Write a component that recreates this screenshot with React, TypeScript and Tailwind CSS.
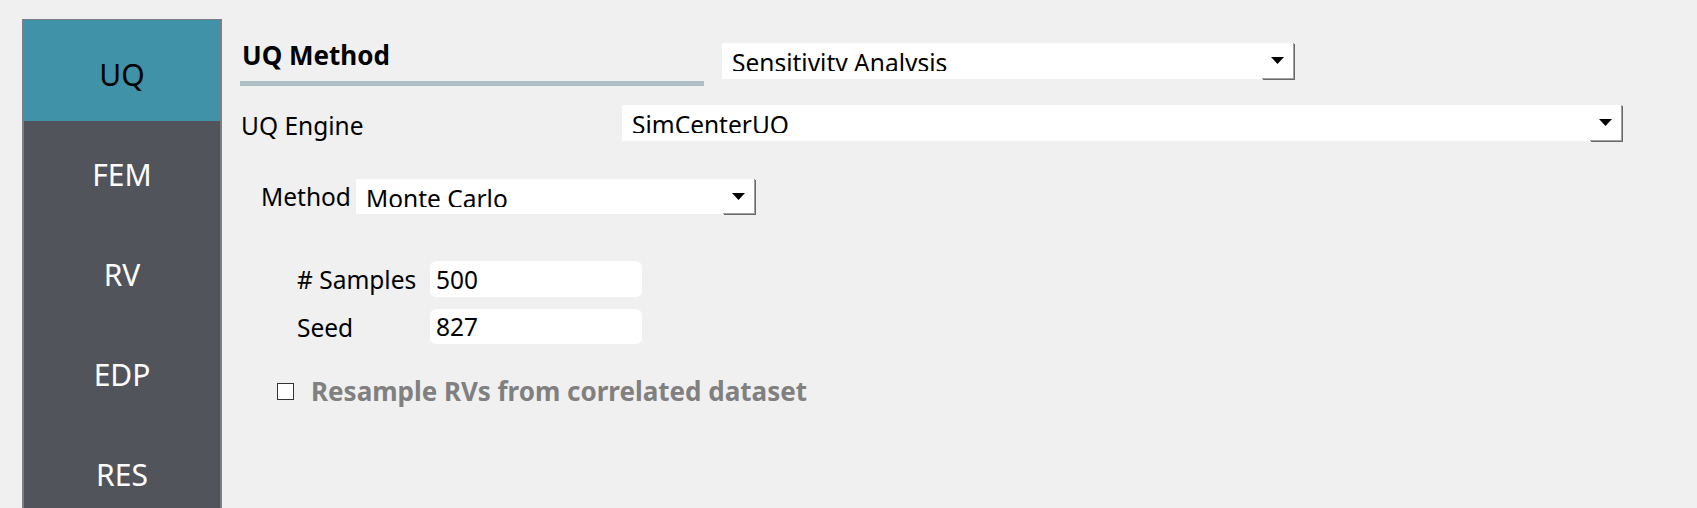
import React from "react";

const tabs = ["UQ", "FEM", "RV", "EDP", "RES"];

function Arrow() {
  return (
    <svg width="13" height="7" viewBox="0 0 13 7" className="block">
      <polygon points="0,0 13,0 6.5,7" fill="#000" />
    </svg>
  );
}

function Combo({ value, width, height = 36 }: { value: string; width: string; height?: number }) {
  return (
    <div className={`flex shrink-0 bg-white ${width}`} style={{ height }}>
      {/* text is clipped at the baseline, as in the original widget */}
      <div className="h-[28px] min-w-0 flex-1 overflow-hidden pl-[10px] pt-[2px]">
        <div className="whitespace-nowrap text-[24.5px] leading-[36px] text-black">{value}</div>
      </div>
      <div className="flex w-[32px] items-center justify-center border-b border-r border-[#a0a0a0] shadow-[1px_1px_0_#696969]">
        <Arrow />
      </div>
    </div>
  );
}

function Field({ label, value, height = 36 }: { label: string; value: string; height?: number }) {
  return (
    <div className="flex items-center" style={{ height }}>
      <div className="ml-[75px] w-[133px] pt-[3px] text-[24.5px] leading-none">{label}</div>
      <div
        className="flex w-[212px] items-center rounded-[6px] bg-white pl-[6px] pt-[2px] text-[24.5px]"
        style={{ height }}
      >
        {value}
      </div>
    </div>
  );
}

export default function App() {
  return (
    <div className="flex h-[508px] w-[1697px] overflow-hidden bg-[#f0f0f0] font-['Noto_Sans',sans-serif] text-black">
      {/* side tabs */}
      <div className="ml-[22px] mt-[19px] flex w-[200px] shrink-0 flex-col overflow-hidden border-l-2 border-r-2 border-t border-[#7b7e84] bg-[#51545b]">
        {tabs.map((t, i) => (
          <div
            key={t}
            className={
              i === 0
                ? "flex h-[101px] shrink-0 items-center justify-center bg-[#3f92a8] pt-[8px] text-[30px] text-black"
                : "flex h-[100px] shrink-0 items-center justify-center pt-[6px] text-[30px] text-white"
            }
          >
            {t}
          </div>
        ))}
      </div>

      {/* content */}
      <div className="flex flex-1 flex-col">
        <div className="mt-[41px] flex items-start">
          <div className="ml-[18px] w-[464px]">
            <div className="h-[28px] whitespace-nowrap pl-[2px] text-[26px] font-bold leading-[28px]">UQ Method</div>
            <div className="mt-[12px] h-[5px] bg-[#b0bec5]" />
          </div>
          <div className="ml-[18px] mt-[2px]">
            <Combo value="Sensitivity Analysis" width="w-[572px]" />
          </div>
        </div>

        <div className="mt-[19px] flex h-[36px] items-center">
          <div className="ml-[19px] w-[381px] pt-[6px] text-[24.5px] leading-none">UQ Engine</div>
          <Combo value="SimCenterUQ" width="w-[1000px]" />
        </div>

        <div className="mt-[38px] flex h-[35px] items-center">
          <div className="ml-[39px] w-[95px] pt-[2px] text-[24.5px] leading-none">Method</div>
          <Combo value="Monte Carlo" width="w-[399px]" height={35} />
        </div>

        <div className="mt-[47px]">
          <Field label="# Samples" value="500" />
        </div>
        <div className="mt-[12px]">
          <Field label="Seed" value="827" height={35} />
        </div>

        <div className="ml-[55px] mt-[32px] flex h-[30px] items-center">
          <div className="h-[17px] w-[17px] shrink-0 border border-[#333] bg-white" />
          <div className="ml-[17px] whitespace-nowrap text-[26px] font-bold text-[#808080]">
            Resample RVs from correlated dataset
          </div>
        </div>
      </div>
    </div>
  );
}
